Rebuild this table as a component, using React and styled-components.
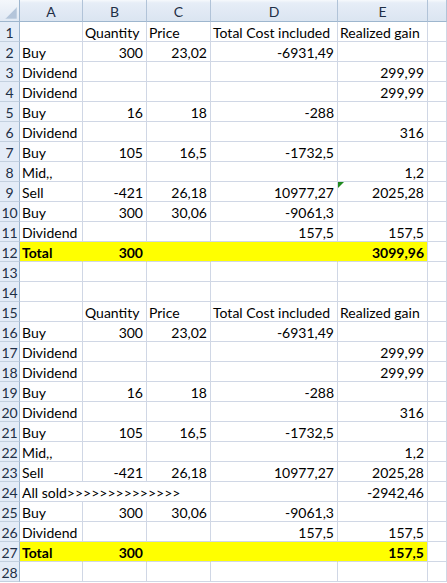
import React from "react";
import styled, { createGlobalStyle } from "styled-components";

const GlobalStyle = createGlobalStyle`
  html, body { margin: 0; padding: 0; background: #fff; }
  body { font-family: "Lato", "Liberation Sans", sans-serif; }
`;

const Sheet = styled.div`
  display: grid;
  grid-template-columns: 20px 63px 64px 64px 127px 90px 1fr;
  grid-template-rows: 22px repeat(28, 20px);
  width: 447px;
  font-family: "Lato", "Liberation Sans", sans-serif;
  font-size: 14px;
  color: #000;
`;

const Corner = styled.div`
  box-sizing: border-box;
  border-right: 1px solid #9eb6ce;
  border-bottom: 1px solid #9eb6ce;
  background: linear-gradient(#f4f7fb, #e1e9f4);
  display: flex;
  align-items: flex-end;
  justify-content: flex-end;
  padding: 0 2px 2px 0;
`;

const ColHeader = styled.div`
  box-sizing: border-box;
  border-right: 1px solid #b1c3d8;
  border-bottom: 1px solid #9eb6ce;
  background: linear-gradient(#f6f9fc 0, #e6edf7 3px, #dbe5f1 100%);
  display: flex;
  align-items: center;
  justify-content: center;
  color: #1e2f46;
  font-size: 14px;
  padding-top: 1px;
`;

const RowHeader = styled.div`
  box-sizing: border-box;
  border-right: 1px solid #9eb6ce;
  border-bottom: 1px solid #c3d0df;
  background: #e4ecf7;
  display: flex;
  align-items: center;
  justify-content: center;
  color: #1e2f46;
  font-size: 14px;
  padding-top: 1px;
`;

const Cell = styled.div`
  position: relative;
  box-sizing: border-box;
  border-right: 1px solid ${(p) => (p.$fill && !p.$edge ? "#ffff00" : "#d0d7e5")};
  border-bottom: 1px solid #d0d7e5;
  background: ${(p) => (p.$fill ? "#ffff00" : "#fff")};
  grid-column: ${(p) => (p.$span ? `span ${p.$span}` : "auto")};
  display: flex;
  align-items: center;
  justify-content: ${(p) => (p.$num ? "flex-end" : "flex-start")};
  padding: 1px ${(p) => (p.$num ? "3px" : "0")} 0 ${(p) => (p.$num ? "0" : "2px")};
  font-weight: ${(p) => (p.$bold ? 700 : 400)};
  white-space: nowrap;
  overflow: visible;
`;

const ErrorMark = styled.span`
  position: absolute;
  left: 0;
  top: 0;
  width: 0;
  height: 0;
  border-top: 6px solid #1f8a1f;
  border-right: 6px solid transparent;
`;

const cols = ["A", "B", "C", "D", "E", ""];

const block = (totalE) => [
  ["", "Quantity", "Price", "Total Cost included", "Realized gain"],
  ["Buy", "300", "23,02", "-6931,49", ""],
  ["Dividend", "", "", "", "299,99"],
  ["Dividend", "", "", "", "299,99"],
  ["Buy", "16", "18", "-288", ""],
  ["Dividend", "", "", "", "316"],
  ["Buy", "105", "16,5", "-1732,5", ""],
  ["Mid,,", "", "", "", "1,2"],
  ["Sell", "-421", "26,18", "10977,27", "2025,28"],
];

const rows = [
  ...block(),
  ["Buy", "300", "30,06", "-9061,3", ""],
  ["Dividend", "", "", "157,5", "157,5"],
  { total: true, b: "300", e: "3099,96" },
  ["", "", "", "", ""],
  ["", "", "", "", ""],
  ...block(),
  { span: true, a: "All sold>>>>>>>>>>>>>>", e: "-2942,46" },
  ["Buy", "300", "30,06", "-9061,3", ""],
  ["Dividend", "", "", "157,5", "157,5"],
  { total: true, b: "300", e: "157,5" },
  ["", "", "", "", ""],
];

function renderRow(r, i) {
  const n = i + 1;
  const key = (k) => `${n}-${k}`;
  const cells = [<RowHeader key={key("h")}>{n}</RowHeader>];
  if (r.total) {
    cells.push(
      <Cell key={key(0)} $fill $bold>Total</Cell>,
      <Cell key={key(1)} $fill $bold $num>{r.b}</Cell>,
      <Cell key={key(2)} $fill />,
      <Cell key={key(3)} $fill />,
      <Cell key={key(4)} $fill $bold $num $edge>{r.e}</Cell>
    );
  } else if (r.span) {
    cells.push(
      <Cell key={key(0)} $span={3}>{r.a}</Cell>,
      <Cell key={key(3)} />,
      <Cell key={key(4)} $num>{r.e}</Cell>
    );
  } else {
    r.forEach((v, c) => {
      const num = n !== 1 && n !== 15 && c > 0;
      cells.push(
        <Cell key={key(c)} $num={num}>
          {n === 9 && c === 4 && <ErrorMark />}
          {v}
        </Cell>
      );
    });
  }
  cells.push(<Cell key={key(5)} />);
  return cells;
}

export default function App() {
  return (
    <>
      <GlobalStyle />
      <Sheet>
        <Corner>
          <svg width="12" height="12" viewBox="0 0 12 12">
            <polygon points="12,0 12,12 0,12" fill="#b4c5da" stroke="#d9e3ef" strokeWidth="0.8" />
          </svg>
        </Corner>
        {cols.map((c, i) => (
          <ColHeader key={i}>{c}</ColHeader>
        ))}
        {rows.map(renderRow)}
      </Sheet>
    </>
  );
}
